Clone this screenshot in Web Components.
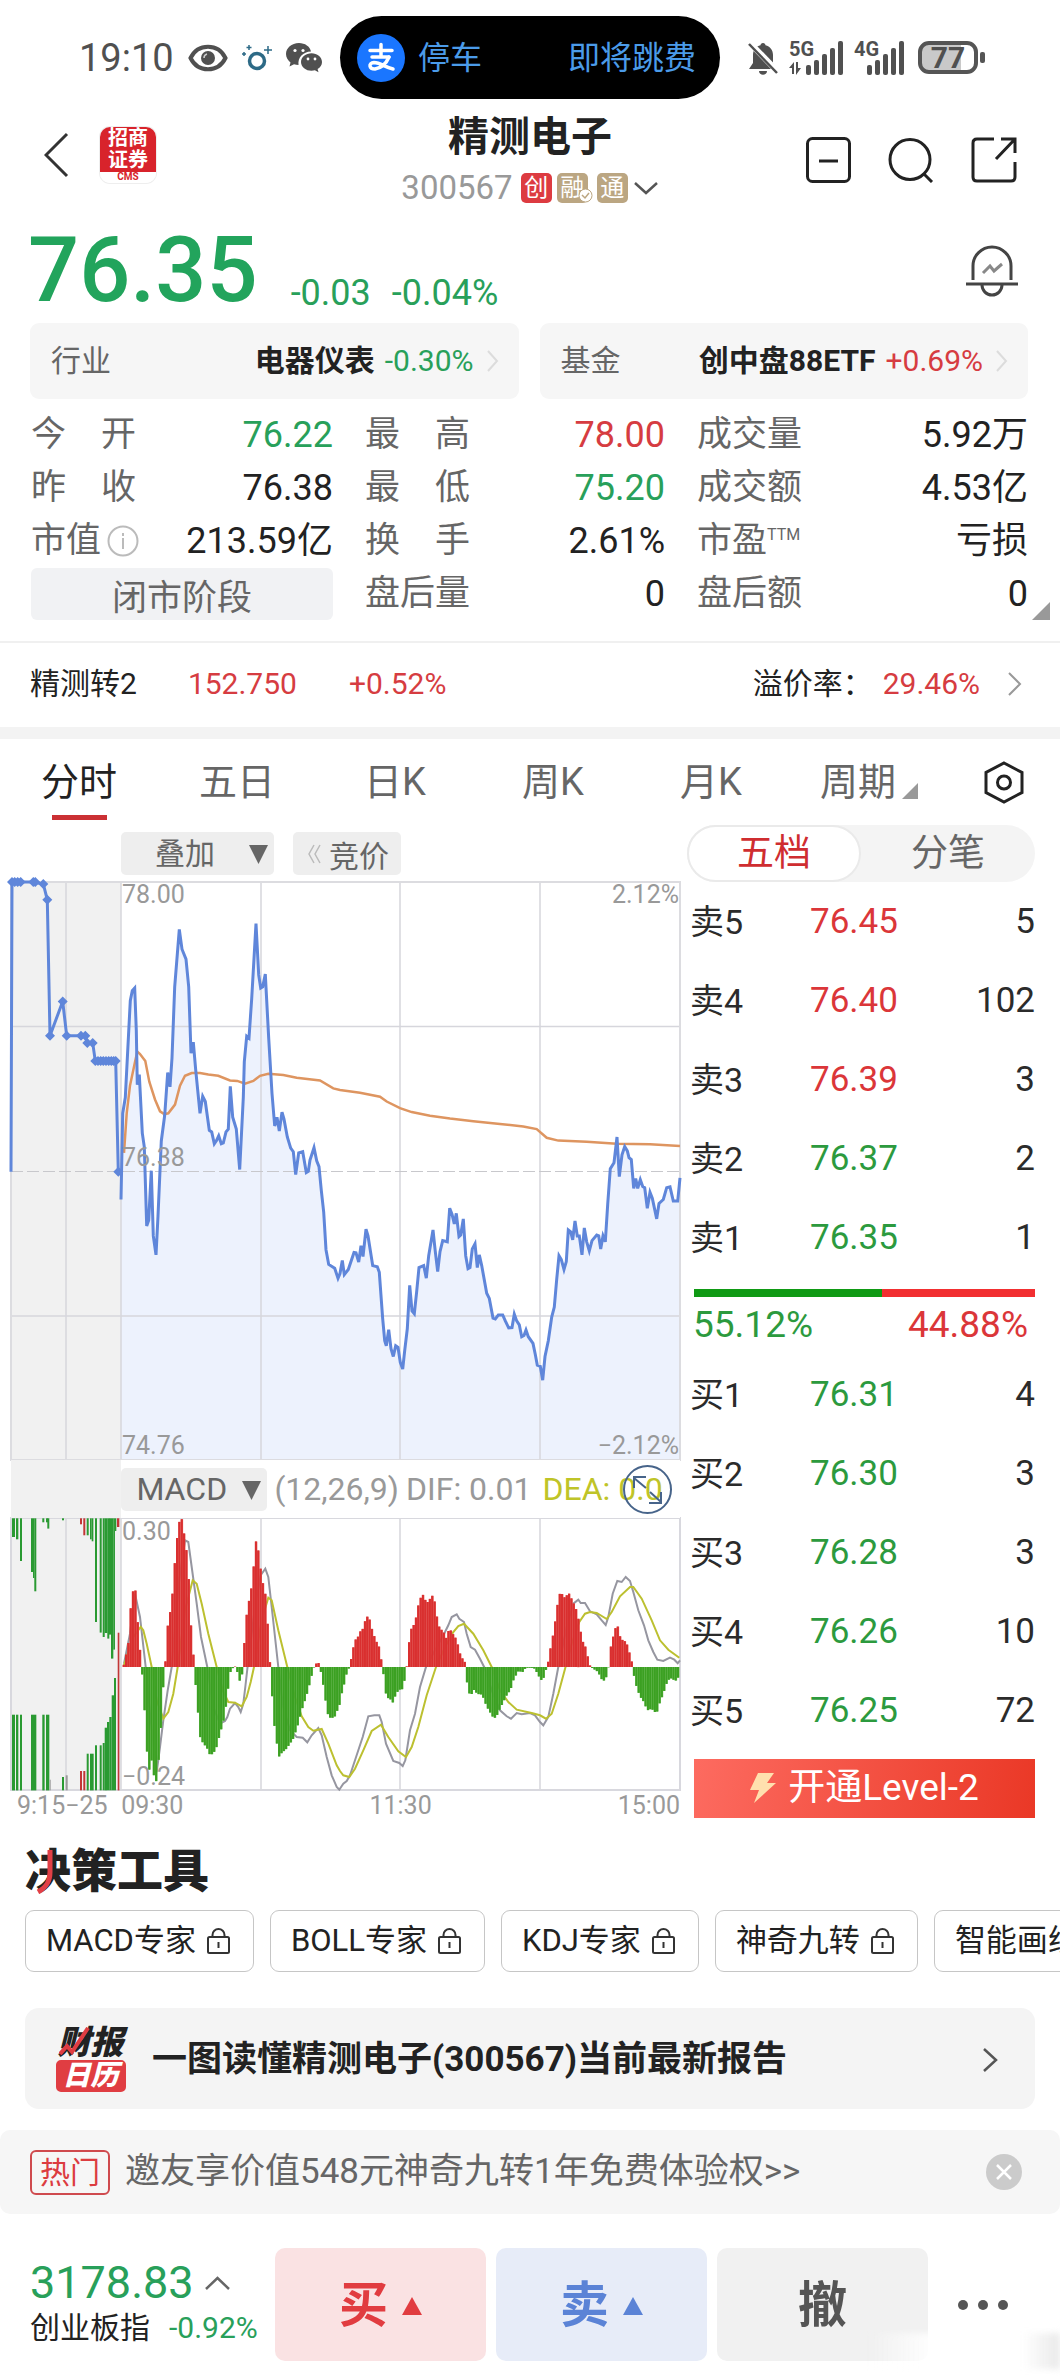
<!DOCTYPE html>
<html lang="zh-CN">
<head>
<meta charset="utf-8">
<meta name="viewport" content="width=device-width, initial-scale=1">
<title>精测电子 300567</title>
<style>
  html { background: #fff; }
  body {
    margin: 0;
    font-family: Roboto, "Noto Sans CJK SC", sans-serif;
    color: #222;
    --up: #d63c41;
    --down: #28a05a;
    --muted: #666;
    --faint: #999;
    overflow-x: hidden;
  }
</style>
</head>
<body>
<stock-page></stock-page>

<script>
const RESET = `
  *, *::before, *::after { box-sizing: border-box; }
  :host { display: block; }
  :host([hidden]) { display: none; }
  button, select { font: inherit; color: inherit; background: none; border: 0; padding: 0; margin: 0; appearance: none; }
  a { color: inherit; text-decoration: none; }
  svg { display: block; flex: none; }
  h1, h2, p, dl, dd, dt { margin: 0; font: inherit; }
  .up { color: var(--up); }
  .down { color: var(--down); }
`;

function define(name, css, html, setup) {
  const template = document.createElement('template');
  template.innerHTML = `<style>${RESET}${css}</style>${html}`;
  customElements.define(name, class extends HTMLElement {
    constructor() {
      super();
      this.attachShadow({ mode: 'open' }).append(template.content.cloneNode(true));
    }
    connectedCallback() { if (setup) setup(this, this.shadowRoot); }
  });
}

/* ---------- status bar ---------- */
define('status-bar', `
  :host { padding-top: 16px; color: #505050; }
  .row { display: grid; grid-template-columns: 1fr 380px 1fr; align-items: center; height: 83px; }
  .left { display: flex; align-items: center; gap: 14px; padding-left: 79px; }
  .time { font-size: 38px; line-height: 48px; }
  .pill { display: flex; align-items: center; height: 83px; padding: 0 24px 0 17px; border-radius: 42px; background: #000; color: #4b9be9; font-size: 32px; line-height: 48px; }
  .pill span:first-of-type { margin-left: 13px; }
  .pill span:last-of-type { margin-left: auto; }
  .right { display: flex; align-items: center; gap: 9px; padding-left: 26px; }
  .sig { display: grid; font-size: 20px; line-height: 17px; font-weight: 700; }
  .sig > * { grid-area: 1 / 1; }
  .batt { display: flex; align-items: center; gap: 2px; margin-left: 4px; }
  .batt b { display: grid; place-items: center; width: 60px; height: 33px; border: 4px solid #555; border-radius: 11px; font-size: 30px; line-height: 25px; background: linear-gradient(90deg, #c9c9c9 0 75%, #fff 75%); }
  .batt i { width: 5px; height: 11px; border-radius: 2px; background: #555; }
`, `
  <div class="row">
    <div class="left">
      <span class="time">19:10</span>
      <svg width="40" height="28" viewBox="0 0 40 28" fill="none" stroke="#505050"><path d="M2.500 14C10-1 30-1 37.500 14C30 29 10 29 2.500 14Z" stroke-width="4"/><circle cx="20" cy="14" r="7" fill="#505050" stroke="none"/><path d="M16 14a4 4 0 0 1 3-4" stroke="#ccc" stroke-width="1.500"/></svg>
      <svg width="30" height="30" viewBox="0 0 30 30" fill="none" stroke="#2d6a86"><circle cx="15" cy="18" r="7.500" stroke-width="3.500"/><path d="M26 3v8M22 7h8M7 2v5M4.500 4.500h5M2 9v4M0 11h4" stroke-width="1.500"/></svg>
      <svg width="36" height="30" viewBox="0 0 36 30" fill="#505050"><path d="M13 0C5.500 0 0 5 0 11c0 3.500 2 6.500 4.500 8.500L3.500 23.500 8 21.300c1.500.5 3 .7 4.500.7C11.500 14.500 17 8.700 25 8.500 24 3.500 19 0 13 0Z"/><path d="M36 19c0-5-4.900-8.800-10.500-8.800S15 14 15 19s4.900 8.800 10.500 8.800c1.200 0 2.400-.2 3.400-.5l3.600 2-.9-3.200C34.300 24.500 36 22 36 19Z"/><g fill="#fff"><circle cx="9" cy="7.500" r="1.600"/><circle cx="17" cy="7.500" r="1.600"/><circle cx="22" cy="16" r="1.400"/><circle cx="29" cy="16" r="1.400"/></g></svg>
    </div>
    <div class="pill">
      <svg width="48" height="48" viewBox="0 0 48 48"><circle cx="24" cy="24" r="24" fill="#1a76ff"/><g fill="none" stroke="#fff" stroke-width="3.500" stroke-linecap="round"><path d="M13 16.500h22M24 10.500v12M15 23h17"/><path d="M32 23c-3 7-8 11-14 12-6 0-7-6-1-6.500 7 0 10 4.500 19 6.500"/></g></svg>
      <span>停车</span><span>即将跳费</span>
    </div>
    <div class="right">
      <svg width="34" height="36" viewBox="0 0 34 36"><path d="M17 3c1.500 0 2.500 1 2.500 2.300C24 6.500 27 10 27 15v8l4 6H3l4-6v-8c0-5 3-8.500 7.500-9.700C14.500 4 15.500 3 17 3ZM13 31h8c0 5-8 5-8 0Z" fill="#505050"/><path d="M4 3 32 32" stroke="#fff" stroke-width="6"/><path d="M3 4 31 33" stroke="#505050" stroke-width="2.500"/></svg>
      <div class="sig"><svg width="56" height="34" viewBox="0 0 56 34" fill="#505050"><rect x="17" y="24" width="5" height="10" rx="2"/><rect x="25" y="19" width="5" height="15" rx="2"/><rect x="33" y="13" width="5" height="21" rx="2"/><rect x="41" y="7" width="5" height="27" rx="2"/><rect x="49" y="0" width="5" height="34" rx="2"/><path d="M0 27 5 21v12H3v-6ZM12 27 7 34V21h2v6Z"/></svg><span>5G</span></div>
      <div class="sig"><svg width="51" height="34" viewBox="0 0 51 34" fill="#505050"><rect x="13" y="24" width="5" height="10" rx="2"/><rect x="21" y="19" width="5" height="15" rx="2"/><rect x="29" y="13" width="5" height="21" rx="2"/><rect x="37" y="7" width="5" height="27" rx="2"/><rect x="45" y="0" width="5" height="34" rx="2"/></svg><span>4G</span></div>
      <div class="batt"><b>77</b><i></i></div>
    </div>
  </div>
`);

/* ---------- title bar ---------- */
define('stock-header', `
  :host { display: grid; grid-template-columns: 1fr auto 1fr; height: 112px; }
  .side { display: flex; align-items: center; }
  .start { gap: 31px; padding-left: 44px; }
  .end { gap: 37px; justify-content: flex-end; padding: 10px 43px 0 0; }
  .logo { display: flex; flex-direction: column; align-items: center; width: 56px; height: 56px; border-radius: 10px; overflow: hidden; color: #fff; font-weight: 700; background: linear-gradient(#d8232b 0 45px, #fff 45px); box-shadow: 0 0 0 1px #eee; }
  .logo span { font-size: 20px; line-height: 22px; }
  .logo small { font-size: 10px; line-height: 12px; color: #d8232b; }
  .title { display: flex; flex-direction: column; align-items: center; gap: 9px; padding-top: 14px; }
  h1 { font-size: 41px; line-height: 48px; font-weight: 700; }
  .code { display: flex; align-items: center; gap: 5px; font-size: 33px; line-height: 36px; color: var(--faint); }
  .tag { position: relative; display: grid; place-items: center; width: 31px; height: 30px; border-radius: 5px; background: #bba682; color: #fff; font-size: 24px; line-height: 30px; }
  .tag.red { background: #dd3b41; margin-left: 3px; }
  .tag svg { position: absolute; right: -5px; bottom: 0; }
  .tag + .tag.last { margin-left: 4px; }
`, `
  <div class="side start">
    <button aria-label="返回"><svg width="25" height="46" viewBox="0 0 25 46" fill="none" stroke="#333" stroke-width="3"><path d="M23 2 2 23 23 44"/></svg></button>
    <div class="logo"><span>招商</span><span>证券</span><small>CMS</small></div>
  </div>
  <div class="title">
    <h1>精测电子</h1>
    <div class="code"><span>300567</span><span class="tag red">创</span><span class="tag">融<svg width="15" height="15" viewBox="0 0 15 15"><circle cx="7.500" cy="7.500" r="6.500" fill="#fff" stroke="#bba682"/><path d="m4 7 3 3 4-5" fill="none" stroke="#bba682" stroke-width="1.500"/></svg></span><span class="tag last">通</span><svg width="26" height="14" viewBox="0 0 26 14" fill="none" stroke="#555" stroke-width="2.500"><path d="m2 2 11 10L24 2"/></svg></div>
  </div>
  <div class="side end" >
    <button aria-label="删除自选"><svg width="45" height="46" viewBox="0 0 45 46" fill="none" stroke="#222" stroke-width="3"><rect x="1.500" y="1.500" width="42" height="43" rx="5"/><path d="M13 24h19"/></svg></button>
    <button aria-label="搜索"><svg width="46" height="46" viewBox="0 0 46 46" fill="none" stroke="#222" stroke-width="3"><circle cx="22" cy="22.500" r="20"/><path d="m36 37 8 8"/></svg></button>
    <button aria-label="分享"><svg width="46" height="46" viewBox="0 0 46 46" fill="none" stroke="#222" stroke-width="3"><path d="M23 2H6Q2 2 2 6v34q0 4 4 4h34q4 0 4-4V25M30 2h14v14M44 2 25 22"/></svg></button>
  </div>
`);

/* ---------- price ---------- */
define('price-row', `
  :host { display: flex; align-items: center; justify-content: space-between; padding: 15px 42px 7px 28px; }
  .nums { display: flex; align-items: flex-end; gap: 21px; color: var(--down); font-size: 36px; line-height: 46px; }
  strong { font-size: 90px; line-height: 90px; font-weight: 500; margin-right: 12px; color: #22a45c; }
`, `
  <div class="nums"><strong>76.35</strong><span>-0.03</span><span>-0.04%</span></div>
  <button aria-label="预警"><svg width="52" height="52" viewBox="0 0 52 52" fill="none" stroke="#444" stroke-width="3"><path d="M7 35V21a19 19 0 0 1 38 0v14M0 39h52"/><path d="M16 40a10 10 0 0 0 20 0"/><path d="m17 28 7-7 4 5 8-7" stroke="#888"/></svg></button>
`);

/* A tappable card: label slot on the left, name and value slots on the right */
define('quote-link', `
  a { display: flex; align-items: center; height: 76px; padding: 0 20px 0 21px; border-radius: 9px; background: #f6f6f6; font-size: 30px; line-height: 40px; color: var(--muted); }
  slot[name=title] { display: block; margin-left: auto; margin-right: 10px; font-weight: 700; color: #222; }
  svg { margin-left: 12px; }
`, `
  <a href="#"><slot></slot><slot name="title"></slot><slot name="change"></slot>
  <svg width="13" height="24" viewBox="0 0 13 24" fill="none" stroke="#dcdcdc" stroke-width="2"><path d="m2 2 9 10-9 10"/></svg></a>
`);

/* ---------- key figures ---------- */
define('quote-stats', `
  :host { position: relative; padding: 9px 32px 21px 31px; border-bottom: 2px solid #f0f0f0; }
  dl { display: grid; grid-template-columns: 302fr 300fr 331fr; column-gap: 32px; grid-auto-rows: 53px; }
  div { display: flex; align-items: center; justify-content: space-between; font-size: 36px; line-height: 48px; }
  dt { display: flex; align-items: center; height: 48px; font-size: 35px; color: var(--muted); }
  dt svg { margin-left: 6px; }
  dt sup { align-self: flex-start; padding-top: 10px; font-size: 16px; line-height: 16px; }
  button { align-self: end; height: 52px; border-radius: 6px; background: #f1f2f4; font-size: 35px; color: #666; }
  .more { position: absolute; right: 10px; bottom: 21px; }
`, `
  <dl>
    <div><dt>今　开</dt><dd class="down">76.22</dd></div>
    <div><dt>最　高</dt><dd class="up">78.00</dd></div>
    <div><dt>成交量</dt><dd>5.92万</dd></div>
    <div><dt>昨　收</dt><dd>76.38</dd></div>
    <div><dt>最　低</dt><dd class="down">75.20</dd></div>
    <div><dt>成交额</dt><dd>4.53亿</dd></div>
    <div><dt>市值<svg width="32" height="32" viewBox="0 0 32 32" fill="none" stroke="#bbb" stroke-width="2"><circle cx="16" cy="16" r="14.500"/><path d="M16 13v11M16 8v3"/></svg></dt><dd>213.59亿</dd></div>
    <div><dt>换　手</dt><dd>2.61%</dd></div>
    <div><dt>市盈<sup>TTM</sup></dt><dd>亏损</dd></div>
    <button>闭市阶段</button>
    <div><dt>盘后量</dt><dd>0</dd></div>
    <div><dt>盘后额</dt><dd>0</dd></div>
  </dl>
  <svg class="more" width="18" height="18" viewBox="0 0 18 18"><path d="M18 0v18H0Z" fill="#999"/></svg>
`);

define('bond-row', `
  :host { border-bottom: 12px solid #f3f3f3; }
  a { display: flex; align-items: center; height: 84px; padding: 0 38px 2px 30px; font-size: 30px; line-height: 40px; }
  .price { margin-left: 51px; }
  .chg { margin-left: 52px; }
  .label { margin-left: auto; margin-right: 10px; }
  svg { margin-left: 28px; }
`, `
  <a href="#"><span>精测转2</span><span class="price up">152.750</span><span class="chg up">+0.52%</span>
  <span class="label">溢价率：</span><span class="up">29.46%</span>
  <svg width="14" height="24" viewBox="0 0 14 24" fill="none" stroke="#999" stroke-width="2"><path d="m1 1 11 11L1 23"/></svg></a>
`);

define('period-tabs', `
  nav { display: grid; grid-template-columns: repeat(6, 158fr) 112fr; height: 86px; font-size: 38px; line-height: 48px; color: var(--muted); }
  button { display: flex; align-items: center; justify-content: center; gap: 6px; }
  button[aria-current] { flex-direction: column; gap: 9px; padding-top: 13px; color: #222; }
  button[aria-current]::after { content: ""; width: 55px; height: 5px; background: #cb3034; }
  .tri { align-self: flex-end; margin-bottom: 26px; }
`, `
  <nav>
    <button aria-current="page">分时</button><button>五日</button><button>日K</button><button>周K</button><button>月K</button>
    <button>周期<svg class="tri" width="16" height="16" viewBox="0 0 16 16"><path d="M16 0v16H0Z" fill="#999"/></svg></button>
    <button aria-label="设置"><svg width="40" height="43" viewBox="0 0 40 43" fill="none" stroke="#222" stroke-width="3"><path d="M20 2 38 11.500v20L20 41 2 31.500v-20Z"/><circle cx="20" cy="21.500" r="6.500"/></svg></button>
  </nav>
`);

/* Drop-down styled as a grey key with a triangle */
define('key-select', `
  label { position: relative; display: flex; align-items: center; height: 43px; border-radius: 5px; background: #eee; color: var(--muted); }
  select { width: var(--w); height: 43px; padding-left: var(--pad); line-height: 43px; font-size: var(--size); }
  svg { position: absolute; right: 6px; top: 13px; pointer-events: none; }
`, `
  <label><select></select><svg width="19" height="19" viewBox="0 0 19 19"><path d="M0 0h19L9.500 19Z" fill="#666"/></svg></label>
`, (host, root) => {
  const select = root.querySelector('select');
  select.setAttribute('aria-label', host.getAttribute('label'));
  select.replaceChildren(new Option(host.getAttribute('value')));
});

/* ---------- charts ---------- */
/* Series are stored flat as x,y pairs. The second half of the session has its own origin, SPLIT. */
const SPLIT = 1020;
const pairs = (text, dx = 0) => {
  const n = text.trim().split(/[\s,]+/).map(Number), out = [];
  for (let i = 0; i < n.length; i += 2) out.push([n[i] + dx, n[i + 1]]);
  return out;
};
const series = (a, b) => [...pairs(a), ...pairs(b, SPLIT)];

const AUCTION = pairs(`33,788 36,55 62,55 100,55 130,60 142,100 150,444 188,357 200,444 243,444 256,444 262,462 278,462 286,508 347,508 355,788`);
const PRICE = series(`363,858 368,640 376,600 391,355 397,330 404,323 409,430 412,568 418,542 427,690 433,725 440,925 446,910 454,785 460,950 468,998 474,900 484,710 494,645 503,537 510,573 516,500 524,320 538,175 546,225 558,250 566,320 573,488 580,460 587,530 600,640 608,597 616,610 628,683 635,687 643,717 650,708 656,697 664,717 670,715 678,687 685,680 691,572 698,650 709,680 719,782 730,600 733,510 740,445 747,450 755,350 768,160 776,290 782,323 788,320 796,288 806,450 816,590 824,672 831,650 838,685 846,637 852,655 862,700 872,728 880,737 887,795 896,740 908,737 919,790 925,787 930,758 942,727 950,760 957,775 964,835 971,890 978,985 986,1022 1004,1032 1014,1057 1020,1045`,
`7,1012 13,1048 25,1035 42,992 48,993 56,1016 63,975 69,1002 78,933 84,950 98,1025 112,1028 118,1042 128,1160 134,1215 139,1228 146,1187 153,1235 160,1255 167,1228 174,1232 181,1270 188,1287 194,1240 202,1185 209,1075 216,1140 223,1147 230,1090 237,1030 251,1025 259,1057 266,1000 279,935 286,990 293,1040 300,990 308,962 322,965 329,880 336,895 343,920 349,893 357,952 362,948 370,907 377,1000 384,1033 390,1030 397,983 405,970 412,1030 418,998 425,1025 440,1095 448,1108 459,1158 466,1160 475,1150 488,1150 496,1165 506,1183 516,1182 523,1148 530,1165 538,1175 545,1205 552,1202 558,1188 565,1205 579,1222 586,1250 592,1277 601,1280 608,1315 615,1255 625,1215 635,1155 643,1130 650,1060 657,1000 664,1010 672,1035 679,1015 685,935 692,940 698,960 705,912 712,950 718,950 726,998 733,930 740,965 748,988 756,962 770,948 776,950 782,983 789,950 796,965 803,870 811,780 822,765 831,700 838,800 846,745 854,724 862,735 867,752 874,757 881,830 887,805 893,830 901,808 908,825 914,828 922,880 930,840 937,855 950,907 957,868 970,858 980,828 990,826 1000,862 1013,862 1020,803`);
const AVERAGE = series(`372,740 380,640 390,570 405,510 412,484 420,490 436,508 448,560 465,605 480,635 493,642 505,640 525,618 540,570 555,545 575,538 600,538 625,542 655,545 690,557 712,558 735,565 760,558 780,545 805,540 850,543 890,550 960,557 1000,577`,
`0,581 60,588 120,598 140,610 180,627 215,637 270,646 330,653 400,660 480,667 550,673 590,680 620,702 655,709 740,712 830,717 930,718 1020,723`);
const HIST = series(`370,0 378,35 386,75 391,165 398,222 405,248 412,145 419,85 422,0 427,-20 433,-108 440,-245 448,-308 455,-280 462,-325 468,-350 475,-290 483,-180 489,-75 493,0 497,18 503,120 510,160 517,212 524,305 531,383 540,446 545,446 551,410 559,355 566,270 573,128 580,40 583,0 586,-40 594,-135 601,-210 610,-230 620,-240 630,-264 640,-260 650,-240 660,-200 670,-165 680,-105 690,-18 697,-5 704,3 710,-5 719,-42 727,-20 730,0 733,68 740,155 747,197 755,240 761,300 768,377 775,350 782,295 790,245 797,215 803,128 810,12 813,0 817,-92 825,-192 832,-238 838,-270 845,-258 860,-245 880,-215 895,-170 905,-130 920,-85 932,-40 940,-5 948,10 957,12 962,-10 968,-40 976,-95 983,-140 993,-155 1005,-148 1017,-118`,
`0,-110 8,-65 15,-45 22,-10 30,0 34,28 41,62 49,88 56,92 63,112 70,115 77,145 84,153 91,138 98,105 110,75 120,55 126,5 130,-10 133,-52 140,-92 150,-95 160,-108 168,-80 178,-68 190,-66 195,-30 200,0 203,14 209,97 216,120 223,128 230,155 237,195 244,212 251,218 258,195 265,195 272,208 279,216 286,188 293,135 300,115 310,108 318,85 325,108 335,110 342,92 350,85 357,50 365,28 374,20 377,-20 384,-62 391,-90 398,-75 405,-65 412,-85 420,-78 430,-92 440,-118 450,-135 460,-152 468,-152 478,-130 490,-105 500,-85 512,-68 522,-35 535,-12 548,-15 558,-2 575,-2 585,-5 595,-25 608,-45 615,-15 622,0 628,33 635,75 642,110 649,160 656,210 663,228 670,210 677,208 684,222 691,218 698,193 705,188 712,158 719,130 726,78 733,72 740,48 747,12 752,0 765,-8 775,-15 783,-35 796,-43 803,-12 806,0 810,48 817,82 824,105 831,135 838,98 845,82 852,80 860,72 867,48 874,25 878,0 882,-25 890,-60 900,-88 912,-105 922,-130 935,-125 950,-140 960,-105 970,-80 980,-50 990,-32 1000,-38 1012,-42 1020,-10`);
const DIF = series(`372,610 390,520 405,400 420,470 437,620 450,760 470,935 480,860 490,780 503,690 515,620 535,380 555,240 565,245 575,320 590,430 603,530 622,620 640,740 660,790 675,782 682,770 690,745 705,728 715,740 722,755 730,730 736,680 745,600 765,440 782,345 796,325 805,350 815,440 825,530 835,620 850,740 870,810 890,830 908,832 922,846 935,825 955,803 965,825 980,890 995,945 1010,980 1018,988`,
`10,970 20,962 30,945 45,900 68,830 85,768 103,765 118,765 125,785 138,850 160,902 178,908 188,917 196,900 210,810 225,760 240,680 258,620 285,570 315,515 325,495 335,470 350,462 358,475 372,485 380,520 392,560 405,568 420,595 435,625 455,690 480,750 500,768 513,775 530,758 545,762 570,758 585,765 600,785 610,795 625,770 640,700 655,620 680,500 700,430 715,418 722,428 735,428 750,453 770,462 785,480 797,494 805,470 818,400 832,362 845,365 857,350 870,362 880,395 895,450 912,495 925,540 940,575 952,598 970,602 990,592 1003,598 1013,609 1020,600`);
const DEA = series(`372,615 400,530 422,500 430,510 440,550 455,620 470,720 490,775 505,755 520,700 533,620 555,450 578,360 590,370 605,430 625,520 650,620 668,690 685,725 705,727 725,738 740,710 752,665 762,620 785,480 805,412 815,420 835,510 862,620 885,710 905,768 925,800 940,811 965,806 985,850 1010,915`,
`0,932 10,945 28,950 45,925 70,870 95,812 123,793 145,830 175,873 198,890 215,860 235,800 260,705 288,620 315,560 340,515 355,497 372,490 400,520 430,570 455,620 480,690 505,725 530,748 575,758 600,765 618,775 635,760 655,700 678,615 695,550 718,485 735,460 750,455 770,458 800,476 815,455 840,408 870,380 880,380 905,415 935,480 960,540 985,568 1018,592`);
/* Call-auction volume: left, width, top, bottom, colour key */
const VOLUME = `36 9 174 230 g,48 7 174 237 g,60 6 174 302 g,93 6 174 335 g,99 4 174 353 g,103 6 174 393 g,127 6 174 186 g,138 6 174 186 g,142 6 174 205 g,186 6 174 180 g,240 6 174 192 r,250 6 174 225 r,260 6 174 225 g,270 5 174 237 g,275 5 174 243 g,285 6 174 485 g,299 6 174 517 g,308 6 174 530 g,314 8 174 518 g,322 6 174 535 g,327 6 174 523 g,333 7 174 595 g,340 5 174 568 g,345 4 174 212 g,351 7 174 200 r,353 5 517 990 r,36 9 763 990 g,48 7 763 990 g,60 6 763 990 g,93 16 763 990 g,127 7 763 990 g,138 10 763 990 g,149 3 958 990 k,186 6 950 990 g,197 6 945 990 k,240 6 932 990 r,250 6 932 990 r,260 6 880 990 g,270 11 880 990 g,285 6 855 990 g,299 6 855 990 g,308 6 848 990 g,314 7 802 990 g,321 7 785 990 g,328 7 770 990 g,335 7 705 990 g,342 6 653 990 g`
  .split(',').map(s => s.split(' '));

const px = x => (x / 3 - 11).toFixed(1);
const path = (pts, fy) => 'M' + pts.map(([x, y]) => `${px(x)} ${fy(y).toFixed(1)}`).join('L');
const priceY = y => (y - 55) / 2.529;
const macdY = y => (y - 173) / 3;

define('price-chart', `
  svg { width: 100%; height: auto; overflow: visible; }
  text { font-size: 25px; fill: #999; }
`, `
  <svg viewBox="0 0 669 578" role="img" aria-label="分时走势">
    <rect width="110" height="578" fill="#f1f1f1"/>
    <path class="area" fill="#edf2fd"/>
    <path d="M0 144.500H669M0 434H669M55 0V578M110 0V578M250 0V578M389 0V578M529 0V578" stroke="#d6d6dc" stroke-width="1.500"/>
    <path d="M0 289.500H669" stroke="#c8c8cc" stroke-dasharray="12 4"/>
    <rect width="669" height="578" fill="none" stroke="#dcdce0" stroke-width="2"/>
    <path class="avg" fill="none" stroke="#de9560" stroke-width="2.500"/>
    <path class="line" fill="none" stroke="#5f86da" stroke-width="3"/>
    <path class="auction" fill="none" stroke="#5f86da" stroke-width="3"/>
    <path class="dots" fill="#5f86da"/>
    <text x="111" y="21">78.00</text><text x="111" y="284">76.38</text><text x="111" y="572">74.76</text>
    <text x="668" y="21" text-anchor="end">2.12%</text><text x="668" y="572" text-anchor="end">−2.12%</text>
  </svg>
`, (host, root) => {
  const set = (cls, d) => root.querySelector('.' + cls).setAttribute('d', d);
  set('area', path(PRICE, priceY) + 'L669 578L110 578Z');
  set('line', path(PRICE, priceY));
  set('avg', path(AVERAGE, priceY));
  set('auction', path(AUCTION, priceY));
  const marks = [...AUCTION.slice(1), [44, 55], [53, 55], [106, 55], ...[294, 302, 310, 318, 326, 334, 341].map(x => [x, 508])];
  set('dots', marks.map(([x, y]) => `M${px(x)} ${(priceY(y) - 5).toFixed(1)}l5 5l-5 5l-5-5Z`).join(''));
});

define('macd-chart', `
  svg { width: 100%; height: auto; overflow: visible; }
  text { font-size: 25px; fill: #999; }
`, `
  <svg viewBox="0 0 669 272" role="img" aria-label="MACD">
    <rect width="110" height="272" fill="#f1f1f1"/>
    <path d="M55 0V272M110 0V272M250 0V272M389 0V272M529 0V272" stroke="#d6d6dc" stroke-width="1.500"/>
    <rect width="669" height="272" fill="none" stroke="#d8d8de" stroke-width="2"/>
    <path class="dif" fill="none" stroke="#9696a0" stroke-width="2"/>
    <path class="dea" fill="none" stroke="#bcc030" stroke-width="2"/>
    <g class="bars"></g>
    <text x="111" y="22">0.30</text><text x="111" y="267">−0.24</text>
  </svg>
`, (host, root) => {
  root.querySelector('.dif').setAttribute('d', path(DIF, macdY));
  root.querySelector('.dea').setAttribute('d', path(DEA, macdY));
  const at = x => {
    const i = HIST.findIndex(p => p[0] >= x);
    if (i < 1) return HIST[0][1];
    const [x0, y0] = HIST[i - 1], [x1, y1] = HIST[i];
    return y0 + (y1 - y0) * (x - x0) / (x1 - x0 || 1);
  };
  const rect = (x, w, y, h, c) => `<rect x="${x}" y="${y.toFixed(1)}" width="${w}" height="${h.toFixed(1)}" fill="${c}"/>`;
  let out = '', step = 1670 / 240;
  for (let i = 0; i < 240; i++) {
    const x = 368 + i * step, v = at(x + step / 2), h = Math.abs(v) / 3;
    const up = v > 0, y = up ? 149 - h : 149;
    out += rect(px(x), 2.4, y, h, up ? '#e2504e' : '#63b84a') + rect(px(x), 2, y, h, up ? '#d92f2f' : '#3ba022');
  }
  const tint = { g: '#2a9a32', r: '#c23636', k: '#9a9a9a' };
  for (const [x, w, t, b, c] of VOLUME) out += rect(px(+x), w / 3, macdY(+t), (b - t) / 3, tint[c]);
  root.querySelector('.bars').innerHTML = out;
});

define('chart-panel', `
  :host { color: var(--faint); }
  .tools { display: flex; gap: 19px; padding: 7px 0 7px 110px; }
  .auction { display: flex; align-items: center; gap: 8px; height: 43px; padding: 0 12px 0 15px; border-radius: 5px; background: #eee; color: var(--muted); font-size: 30px; }
  .overlay { --w: 153px; --pad: 34px; --size: 30px; }
  .macd { --w: 146px; --pad: 15px; --size: 32px; }
  .bar { position: relative; display: flex; align-items: center; gap: 7px; height: 58px; padding-left: 16.5%; background: linear-gradient(90deg, #f1f1f1 0 16.5%, #fff 16.5%); font-size: 32px; line-height: 40px; white-space: nowrap; }
  .bar .dea { margin-left: 4px; color: #bfc428; }
  .zoom { position: absolute; right: 8px; top: 5px; }
  .times { display: grid; grid-template-columns: 110fr 139fr 280fr 139fr; height: 30px; font-size: 25px; line-height: 32px; }
  .times span:nth-child(1) { padding-left: 6px; }
  .times span:nth-child(3) { text-align: center; }
  .times span:nth-child(4) { text-align: right; }
`, `
  <div class="tools">
    <key-select class="overlay" label="叠加" value="叠加"></key-select>
    <button class="auction"><svg width="13" height="20" viewBox="0 0 13 20" fill="none" stroke="#bbb" stroke-width="1.500"><path d="M6 1 1 10l5 9M12 1 7 10l5 9"/></svg>竞价</button>
  </div>
  <price-chart></price-chart>
  <div class="bar">
    <key-select class="macd" label="指标" value="MACD"></key-select>
    <span>(12,26,9)</span><span>DIF: 0.01</span><span class="dea">DEA: 0.0</span>
    <button class="zoom" aria-label="放大"><svg width="49" height="49" viewBox="0 0 49 49" fill="none" stroke="#47648a" stroke-width="2"><circle cx="24.500" cy="24.500" r="23.500"/><path d="M23 23 11 13M11 23V12h12M27 27l11 10M38 27v11H26"/></svg></button>
  </div>
  <macd-chart></macd-chart>
  <div class="times"><span>9:15−25</span><span>09:30</span><span>11:30</span><span>15:00</span></div>
`);

/* ---------- order book ---------- */
define('order-book', `
  .toggle { display: grid; grid-template-columns: 1fr 1fr; height: 57px; border-radius: 29px; background: #f4f4f4; font-size: 37px; line-height: 48px; color: var(--muted); }
  .toggle button { border-radius: 29px; }
  .toggle [aria-pressed=true] { background: #fff; border: 2px solid #eaeaea; color: #cf2d30; }
  table { width: 100%; border-collapse: collapse; font-size: 35px; line-height: 48px; color: #2b2b2b; table-layout: fixed; }
  tr { height: 79px; }
  th, td { padding: 0; font-weight: 400; text-align: left; }
  th { width: 123px; padding-left: 3px; font-size: 34px; }
  td:last-child { text-align: right; }
  .up { color: #db3639; }
  .down { color: #2c9a3e; }
  .ratio { display: flex; height: 8px; margin: 12px 0 10px 7px; background: #f22f31; }
  .ratio i { width: 55.12%; background: #0f9a14; }
  .pct { display: flex; justify-content: space-between; padding: 0 7px 0 6px; font-size: 37px; line-height: 36px; margin-bottom: 12px; }
  .level { display: flex; align-items: center; justify-content: center; gap: 12px; height: 59px; margin: 9px 0 0 7px; padding-bottom: 2px; color: #fff; font-size: 37px; line-height: 48px; background: linear-gradient(100deg, #fd6b60, #ea3826); }
`, `
  <div class="toggle"><button aria-pressed="true">五档</button><button aria-pressed="false">分笔</button></div>
  <table class="ask"></table>
  <div class="ratio"><i></i></div>
  <div class="pct"><span class="down">55.12%</span><span class="up">44.88%</span></div>
  <table class="bid"></table>
  <a class="level" href="#"><svg width="26" height="30" viewBox="0 0 26 30"><path d="M8 0h16l-7 10h9L4 30l5-13H0Z" fill="#ffe0ae"/></svg>开通Level-2</a>
`, (host, root) => {
  const rows = list => '<tbody>' + list.map(([n, p, q, c]) => `<tr><th scope="row">${n}</th><td class="${c}">${p}</td><td>${q}</td></tr>`).join('') + '</tbody>';
  root.querySelector('.ask').innerHTML = rows([['卖5', '76.45', 5, 'up'], ['卖4', '76.40', 102, 'up'], ['卖3', '76.39', 3, 'up'], ['卖2', '76.37', 2, 'down'], ['卖1', '76.35', 1, 'down']]);
  root.querySelector('.bid').innerHTML = rows([['买1', '76.31', 4, 'down'], ['买2', '76.30', 3, 'down'], ['买3', '76.28', 3, 'down'], ['买4', '76.26', 10, 'down'], ['买5', '76.25', 72, 'down']]);
});

/* ---------- decision tools ---------- */
define('tool-chip', `
  :host { flex: none; }
  button { display: flex; align-items: center; gap: 11px; height: 62px; padding: 0 23px 0 20px; border: 1px solid #c6c6c6; border-radius: 9px; font-size: 31px; line-height: 40px; white-space: nowrap; }
`, `
  <button><slot></slot><svg width="23" height="26" viewBox="0 0 23 26" fill="none" stroke="#333" stroke-width="2"><rect x="1" y="9" width="21" height="16" rx="1.500"/><path d="M5.500 9V7a6 6 0 0 1 12 0v2M11.500 14v6"/></svg></button>
`);

define('decision-tools', `
  .head { position: relative; margin: 21px 25px 9px; }
  h2 { font-size: 46px; line-height: 60px; font-weight: 900; }
  .head svg { position: absolute; left: 9px; top: 8px; }
  .chips { display: flex; gap: 16px; padding-left: 25px; overflow: hidden; }
`, `
  <div class="head"><h2>决策工具</h2><svg width="22" height="45" viewBox="0 0 22 45"><path d="M16 1v22C16 32 13 38 4 43" fill="none" stroke="#e24046" stroke-width="5"/></svg></div>
  <div class="chips"><tool-chip>MACD专家</tool-chip><tool-chip>BOLL专家</tool-chip><tool-chip>KDJ专家</tool-chip><tool-chip>神奇九转</tool-chip><tool-chip>智能画线</tool-chip></div>
`);

define('report-card', `
  :host { margin: 36px 25px 0; }
  a { display: flex; align-items: center; height: 101px; padding: 2px 37px 0 30px; border-radius: 14px; background: #f4f4f4; font-size: 35px; line-height: 48px; font-weight: 700; white-space: nowrap; }
  .icon { position: relative; display: flex; flex-direction: column; align-items: center; gap: 1px; width: 71px; margin-right: 26px; font-size: 33px; line-height: 32px; font-weight: 900; font-style: italic; }
  .icon b { width: 70px; height: 32px; border: 2px solid #e03d42; border-radius: 5px; background: #e03d42; color: #fff; font-size: 28px; line-height: 28px; text-align: center; }
  .icon svg { position: absolute; left: 4px; top: 0; }
  .go { margin-left: auto; }
`, `
  <a href="#"><span class="icon"><span>财报</span><b>日历</b><svg width="34" height="30" viewBox="0 0 34 30"><path d="m1 27 7-8 5 6L29 1" fill="none" stroke="#e03d42" stroke-width="4"/></svg></span>
  <slot></slot><svg class="go" width="16" height="26" viewBox="0 0 16 26" fill="none" stroke="#555" stroke-width="2.500"><path d="m2 2 12 11L2 24"/></svg></a>
`);

define('hot-banner', `
  :host { display: flex; align-items: center; height: 84px; margin-top: 21px; padding: 0 38px 0 30px; border-radius: 10px; background: #f6f6f6; font-size: 35px; line-height: 48px; color: var(--muted); white-space: nowrap; }
  .tag { height: 45px; padding: 0 8px; margin-right: 15px; border: 2px solid #cf4a4e; border-radius: 6px; color: #dc3c40; font-size: 30px; line-height: 41px; }
  button { margin-left: auto; }
`, `
  <span class="tag">热门</span><a href="#"><slot></slot></a>
  <button aria-label="关闭"><svg width="36" height="36" viewBox="0 0 36 36"><circle cx="18" cy="18" r="18" fill="#cbcbcb"/><path d="m11 11 14 14M25 11 11 25" stroke="#fff" stroke-width="2.500"/></svg></button>
`);

/* ---------- bottom bar ---------- */
define('trade-bar', `
  :host { position: relative; display: grid; grid-template-columns: 235px repeat(3, 1fr) 90px; gap: 10px; padding: 34px 32px 15px 30px; }
  .index { display: flex; flex-direction: column; justify-content: center; gap: 4px; white-space: nowrap; padding-bottom: 4px; }
  .value { display: flex; align-items: center; gap: 11px; font-size: 45px; line-height: 46px; color: var(--down); }
  .name { display: flex; gap: 19px; font-size: 30px; line-height: 36px; }
  .act { display: flex; align-items: center; justify-content: center; gap: 14px; height: 113px; border-radius: 10px; font-size: 49px; line-height: 60px; font-weight: 700; padding-top: 2px; }
  .buy { background: #fae2e3; color: #e13c40; }
  .sell { background: #e7ecf8; color: #5b83d6; }
  .cancel { background: #f1f1f1; color: #555; }
  .more { justify-self: center; }
  .haze { position: absolute; right: 0; bottom: 7px; width: 190px; height: 36px; pointer-events: none; background: linear-gradient(90deg, rgba(255,255,255,0), rgba(255,255,255,.85) 30% 80%, rgba(228,228,228,.8)); filter: blur(3px); }
`, `
  <div class="index">
    <div class="value"><span>3178.83</span><svg width="25" height="14" viewBox="0 0 25 14" fill="none" stroke="#666" stroke-width="2.500"><path d="M1 13 12.500 2 24 13"/></svg></div>
    <div class="name"><span>创业板指</span><span class="down">-0.92%</span></div>
  </div>
  <button class="act buy">买<svg width="20" height="18" viewBox="0 0 20 18"><path d="m10 0 10 18H0Z" fill="currentColor"/></svg></button>
  <button class="act sell">卖<svg width="20" height="18" viewBox="0 0 20 18"><path d="m10 0 10 18H0Z" fill="currentColor"/></svg></button>
  <button class="act cancel">撤</button>
  <button class="more" aria-label="更多"><svg width="52" height="12" viewBox="0 0 52 12" fill="#555"><circle cx="6" cy="6" r="5"/><circle cx="26" cy="6" r="5"/><circle cx="46" cy="6" r="5"/></svg></button>
  <div class="haze"></div>
`);

define('stock-page', `
  .links { display: grid; grid-template-columns: 1fr 1fr; gap: 21px; padding: 0 32px 0 30px; }
  .market { display: grid; grid-template-columns: 669fr 348fr; gap: 7px; padding: 0 25px 0 11px; }
`, `
  <status-bar></status-bar>
  <stock-header></stock-header>
  <price-row></price-row>
  <div class="links">
    <quote-link>行业<span slot="title">电器仪表</span><span slot="change" class="down">-0.30%</span></quote-link>
    <quote-link>基金<span slot="title">创中盘88ETF</span><span slot="change" class="up">+0.69%</span></quote-link>
  </div>
  <quote-stats></quote-stats>
  <bond-row></bond-row>
  <period-tabs></period-tabs>
  <div class="market"><chart-panel></chart-panel><order-book></order-book></div>
  <decision-tools></decision-tools>
  <report-card>一图读懂精测电子(300567)当前最新报告</report-card>
  <hot-banner>邀友享价值548元神奇九转1年免费体验权&gt;&gt;</hot-banner>
  <trade-bar></trade-bar>
`);
</script>
</body>
</html>
